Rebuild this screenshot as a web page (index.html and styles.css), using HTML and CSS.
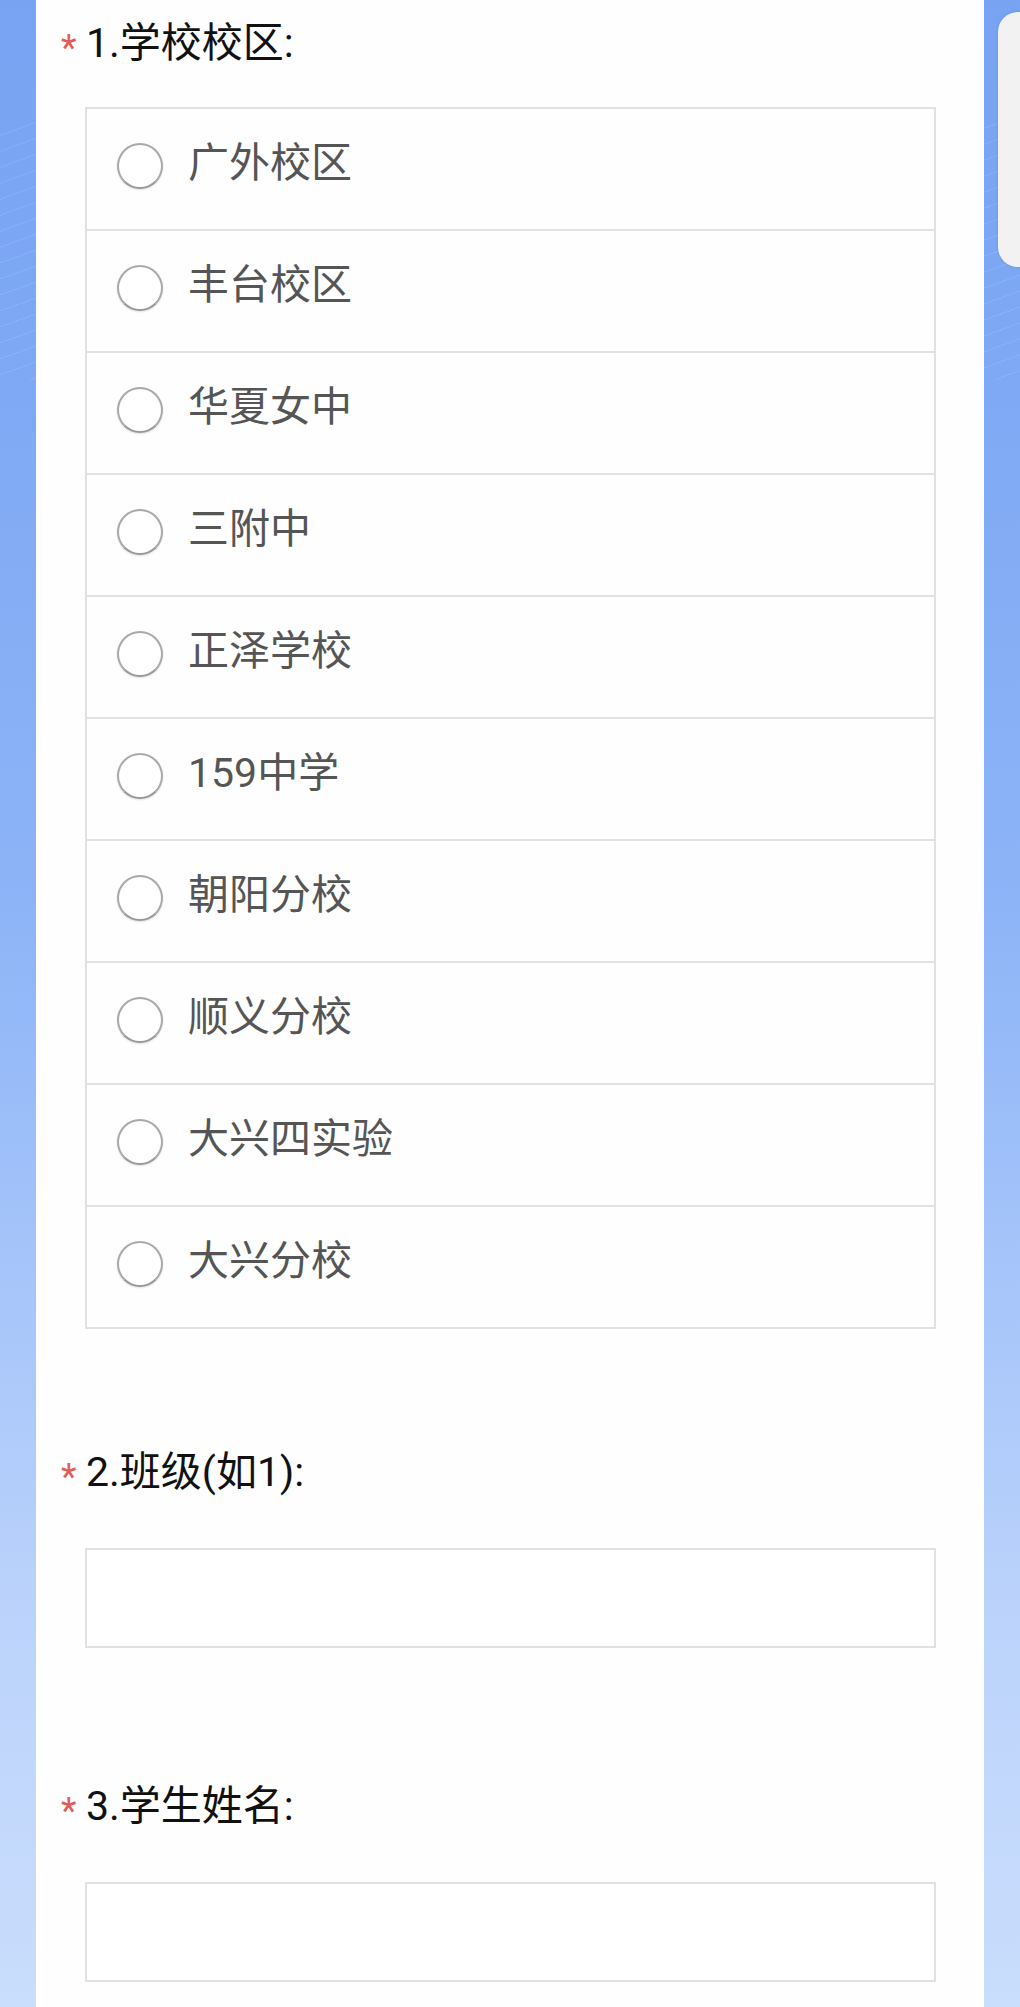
FILE: index.html
```html
<!DOCTYPE html>
<html lang="zh-CN">
<head>
<meta charset="utf-8">
<title>问卷</title>
<link rel="stylesheet" href="styles.css">
</head>
<body>
<div class="page">
  <div class="side-panel"></div>
  <main class="card">
    <section class="question q1">
      <div class="q-title"><span class="req">*</span><span class="q-text">1.学校校区:</span></div>
      <div class="options">
        <label class="option"><span class="radio"></span><span class="opt-text">广外校区</span></label>
        <label class="option"><span class="radio"></span><span class="opt-text">丰台校区</span></label>
        <label class="option"><span class="radio"></span><span class="opt-text">华夏女中</span></label>
        <label class="option"><span class="radio"></span><span class="opt-text">三附中</span></label>
        <label class="option"><span class="radio"></span><span class="opt-text">正泽学校</span></label>
        <label class="option"><span class="radio"></span><span class="opt-text">159中学</span></label>
        <label class="option"><span class="radio"></span><span class="opt-text">朝阳分校</span></label>
        <label class="option"><span class="radio"></span><span class="opt-text">顺义分校</span></label>
        <label class="option"><span class="radio"></span><span class="opt-text">大兴四实验</span></label>
        <label class="option"><span class="radio"></span><span class="opt-text">大兴分校</span></label>
      </div>
    </section>
    <section class="question q2">
      <div class="q-title"><span class="req">*</span><span class="q-text">2.班级(如1):</span></div>
      <div class="text-input"></div>
    </section>
    <section class="question q3">
      <div class="q-title"><span class="req">*</span><span class="q-text">3.学生姓名:</span></div>
      <div class="text-input"></div>
    </section>
  </main>
</div>
</body>
</html>
```
FILE: styles.css
```css
html, body {
  margin: 0;
  padding: 0;
}
body {
  width: 1020px;
  height: 2007px;
  overflow: hidden;
  background: linear-gradient(to bottom, #77a3f2 0%, #7fa9f4 20%, #8db4f7 45%, #a8c6fa 65%, #bdd4fb 82%, #c9ddfc 100%);
  font-family: Roboto, "Noto Sans CJK SC", sans-serif;
}
.page {
  position: relative;
  height: 2007px;
  padding: 0 36px;
  box-sizing: border-box;
  background:
    repeating-linear-gradient(160deg, rgba(255,255,255,0) 0 14px, rgba(255,255,255,0.10) 14px 15px) 0 120px / 100% 260px no-repeat;
}
.side-panel {
  position: absolute;
  top: 12px;
  left: 998px;
  width: 60px;
  height: 255px;
  border-radius: 20px;
  background: #f2f2f3;
  box-shadow: 0 0 3px rgba(0,0,0,0.12);
}
.card {
  background: #fefefe;
  height: 2007px;
  padding: 16px 48px 0 49px;
  box-sizing: border-box;
}
.q-title {
  display: flex;
  align-items: center;
  height: 56px;
  font-size: 41px;
  color: #111;
  line-height: 56px;
}
.q-text {
  line-height: 50px;
  padding-bottom: 2px;
}
.req {
  width: 25px;
  margin-left: -25px;
  color: #e25b57;
  font-size: 36px;
  line-height: 36px;
  height: 36px;
  padding-top: 8px;
  padding-left: 1px;
  box-sizing: content-box;
}
.options {
  margin-top: 35px;
  border: 2px solid #e1e1e1;
  border-bottom: none;
}
.option {
  display: flex;
  align-items: center;
  height: 122px;
  padding: 0 0 7px 30px;
  box-sizing: border-box;
  border-bottom: 2px solid #e1e1e1;
}
.radio {
  width: 46px;
  height: 46px;
  box-sizing: border-box;
  border: 2px solid #a9a9a9;
  border-bottom-color: #999;
  border-radius: 50%;
  background: #fff;
  box-shadow: 0 1px 2px rgba(0,0,0,0.12);
  flex: none;
}
.opt-text {
  margin-left: 25px;
  font-size: 41px;
  line-height: 50px;
  padding-bottom: 5px;
  color: #555;
}
.q2 {
  margin-top: 116px;
}
.q3 {
  margin-top: 131px;
}
.text-input {
  margin-top: 47px;
  height: 100px;
  box-sizing: border-box;
  border: 2px solid #e1e1e1;
  background: #fff;
}
```
